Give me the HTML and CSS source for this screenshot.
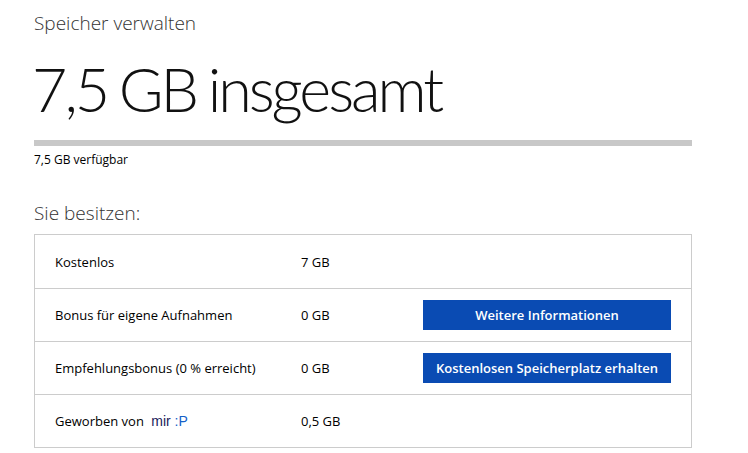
FILE: index.html
```html
<!DOCTYPE html>
<html lang="de">
<head>
<meta charset="utf-8">
<link rel="stylesheet" href="styles.css">
</head>
<body>
<div class="page">
  <h2 class="subtitle">Speicher verwalten</h2>
  <h1 class="total">7,5 GB insgesamt</h1>
  <div class="bar"></div>
  <div class="avail">7,5 GB verfügbar</div>
  <h2 class="own">Sie besitzen:</h2>
  <div class="table">
    <div class="row">
      <div class="label">Kostenlos</div>
      <div class="value">7 GB</div>
      <div class="action"></div>
    </div>
    <div class="row">
      <div class="label">Bonus für eigene Aufnahmen</div>
      <div class="value">0 GB</div>
      <div class="action"><button class="btn">Weitere Informationen</button></div>
    </div>
    <div class="row">
      <div class="label">Empfehlungsbonus (0 % erreicht)</div>
      <div class="value">0 GB</div>
      <div class="action"><button class="btn">Kostenlosen Speicherplatz erhalten</button></div>
    </div>
    <div class="row">
      <div class="label">Geworben von <span class="mir">mir <span class="p">:P</span></span></div>
      <div class="value">0,5 GB</div>
      <div class="action"></div>
    </div>
  </div>
</div>
</body>
</html>
```
FILE: styles.css
```css
html, body {
  margin: 0;
  padding: 0;
  background: #fff;
}
body {
  font-family: "Open Sans", "Noto Sans", sans-serif;
  color: #000;
}
.page {
  padding: 10px 0 0 34px;
  width: 658px;
}
.subtitle {
  margin: 0;
  font-size: 19px;
  font-weight: 300;
  line-height: 26px;
  color: #333;
}
.total {
  margin: 18px 0 0 -2px;
  font-family: "Lato", "Open Sans", sans-serif;
  font-size: 61px;
  font-weight: 300;
  line-height: 70px;
  letter-spacing: -3px;
  word-spacing: -2px;
  color: #111;
}
.bar {
  margin-top: 16px;
  height: 6px;
  background: #c8c8c8;
}
.avail {
  margin-top: 5px;
  font-size: 12px;
  line-height: 17px;
}
.own {
  margin: 32px 0 0 0;
  font-size: 19px;
  font-weight: 300;
  line-height: 26px;
  color: #333;
}
.table {
  margin-top: 8px;
  border: 1px solid #cccccc;
}
.row {
  display: grid;
  grid-template-columns: 246px 122px 248px;
  align-items: center;
  height: 52px;
  padding-left: 20px;
  border-top: 1px solid #cccccc;
  font-size: 13px;
}
.row:first-child {
  border-top: none;
  height: 53px;
}
.label, .value {
  line-height: 18px;
}
.btn {
  display: block;
  width: 248px;
  height: 30px;
  border: none;
  background: #0a4bb3;
  color: #fff;
  font-family: "Open Sans", "Noto Sans", sans-serif;
  font-weight: 600;
  font-size: 13px;
  padding: 0;
}
.mir {
  font-family: "Liberation Sans", Arial, sans-serif;
  font-size: 14px;
  color: #1a1a5a;
  margin-left: 4px;
}
.mir .p {
  color: #1560c8;
}
```
